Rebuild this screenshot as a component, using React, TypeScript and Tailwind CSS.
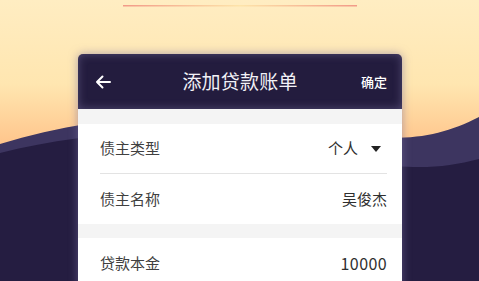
import React from "react";

const Row: React.FC<{ label: string; value: string; caret?: boolean; divider?: boolean; num?: boolean }> = ({
  label,
  value,
  caret,
  divider,
  num,
}) => (
  <div className="pl-[22px] pr-[15px] bg-white">
    <div className={`h-[50px] flex items-center justify-between ${divider ? "border-b border-[#e3e3e3]" : ""}`}>
      <span className="text-[15px] text-[#404040]">{label}</span>
      <span className={`flex items-center text-[#2f2f2f] ${num ? "text-[16px] tracking-[0.4px]" : "text-[15px]"}`}>
        {value}
        {caret && (
          <svg width="10" height="6" viewBox="0 0 10 6" className="ml-[13px] mr-[6px]">
            <path d="M0 0 L10 0 L5 6 Z" fill="#222" />
          </svg>
        )}
      </span>
    </div>
  </div>
);

const App: React.FC = () => {
  return (
    <div
      className="relative w-[479px] h-[281px] overflow-hidden"
      style={{ fontFamily: '"Noto Sans CJK SC", "Noto Sans", sans-serif' }}
    >
      {/* background */}
      <svg className="absolute inset-0" width="479" height="281" viewBox="0 0 479 281">
        <defs>
          <linearGradient id="sky" x1="0" y1="0" x2="0" y2="1">
            <stop offset="0" stopColor="#ffedc2" />
            <stop offset="0.3" stopColor="#ffe6b0" />
            <stop offset="0.5" stopColor="#ffc78e" />
            <stop offset="0.6" stopColor="#ffb078" />
          </linearGradient>
          <linearGradient id="line" x1="0" y1="0" x2="1" y2="0">
            <stop offset="0" stopColor="#f29a88" />
            <stop offset="0.5" stopColor="#fde4aa" />
            <stop offset="1" stopColor="#f29a88" />
          </linearGradient>
        </defs>
        <rect width="479" height="281" fill="url(#sky)" />
        <path d="M0 144 C 90 116 190 108 290 126 S 430 142 479 117 L479 281 L0 281 Z" fill="#3d3560" />
        <path d="M0 153 C 90 130 190 126 290 148 S 430 172 479 159 L479 281 L0 281 Z" fill="#251d41" />
        <rect x="123" y="5" width="234" height="1.5" fill="url(#line)" />
      </svg>

      <div className="relative pt-[54px] pl-[78px]">
        <div className="w-[324px] rounded-t-[5px] overflow-hidden shadow-[0_0_10px_rgba(120,110,160,0.6)]">
          <div className="relative h-[55px] bg-[#231c3e] flex items-center justify-between pl-[17px] pr-[15px] text-white shadow-[inset_0_0_10px_rgba(140,130,180,0.45)]">
            <svg width="16" height="14" viewBox="0 0 16 14" className="mt-[1px]">
              <path d="M15 7 H2 M7.5 1.5 L2 7 L7.5 12.5" stroke="#fff" strokeWidth="2" fill="none" strokeLinecap="round" strokeLinejoin="round" />
            </svg>
            <span className="absolute left-0 right-0 text-center text-[19px] tracking-[0.2px] text-[#f2f1f6]">添加贷款账单</span>
            <span className="text-[13px] font-medium">确定</span>
          </div>
          <div className="h-[15px] bg-[#f4f4f4]" />
          <Row label="债主类型" value="个人" caret divider />
          <Row label="债主名称" value="吴俊杰" />
          <div className="h-[14px] bg-[#f4f4f4]" />
          <Row label="贷款本金" value="10000" num />
        </div>
      </div>
    </div>
  );
};

export default App;
